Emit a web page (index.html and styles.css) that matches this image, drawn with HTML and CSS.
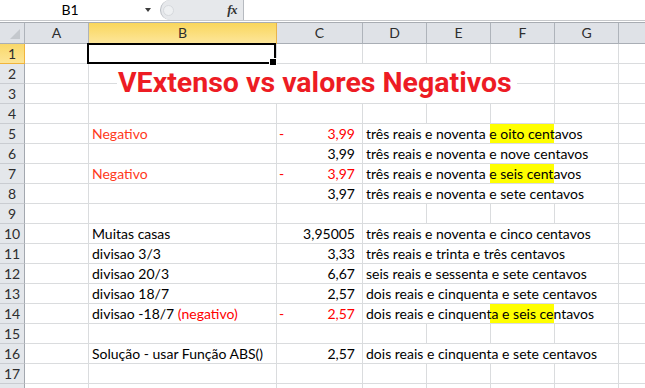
FILE: index.html
```html
<!DOCTYPE html>
<html lang="pt">
<head>
<meta charset="utf-8">
<title>VExtenso vs valores Negativos</title>
<link rel="stylesheet" href="styles.css">
</head>
<body>
<div class="fbar">
  <div class="namebox">B1</div>
  <div class="nbarrow"></div>
  <div class="fxbox"><span class="knob"></span><span class="fx">fx</span></div>
  <div class="finput"></div>
</div>
<div class="sep"></div>
<div class="sheet">
  <!-- header row -->
  <div class="hd corner"></div>
  <div class="hd">A</div>
  <div class="hd sel">B</div>
  <div class="hd">C</div>
  <div class="hd">D</div>
  <div class="hd">E</div>
  <div class="hd">F</div>
  <div class="hd">G</div>
  <div class="hd"></div>

  <!-- row 1 -->
  <div class="rh rsel">1</div>
  <div class="c"></div>
  <div class="c active"></div>
  <div class="c"></div><div class="c"></div><div class="c"></div><div class="c"></div><div class="c"></div><div class="c"></div>

  <!-- row 2-3 -->
  <div class="rh">2</div>
  <div class="c"></div>
  <div class="c title">VExtenso vs valores Negativos</div>
  <div class="c"></div><div class="c"></div>
  <div class="rh">3</div>
  <div class="c"></div>
  <div class="c"></div><div class="c"></div>

  <!-- row 4 -->
  <div class="rh">4</div>
  <div class="c"></div><div class="c"></div><div class="c"></div><div class="c"></div><div class="c"></div><div class="c"></div><div class="c"></div><div class="c"></div>

  <!-- row 5 -->
  <div class="rh">5</div>
  <div class="c"></div>
  <div class="c t neg">Negativo</div>
  <div class="c num red"><span>-</span><span>3,99</span></div>
  <div class="c t span4 yel">três reais e noventa e oito centavos</div>
  <div class="c"></div>

  <!-- row 6 -->
  <div class="rh">6</div>
  <div class="c"></div>
  <div class="c"></div>
  <div class="c num"><span></span><span>3,99</span></div>
  <div class="c t span4">três reais e noventa e nove centavos</div>
  <div class="c"></div>

  <!-- row 7 -->
  <div class="rh">7</div>
  <div class="c"></div>
  <div class="c t neg">Negativo</div>
  <div class="c num red"><span>-</span><span>3,97</span></div>
  <div class="c t span4 yel">três reais e noventa e seis centavos</div>
  <div class="c"></div>

  <!-- row 8 -->
  <div class="rh">8</div>
  <div class="c"></div>
  <div class="c"></div>
  <div class="c num"><span></span><span>3,97</span></div>
  <div class="c t span4">três reais e noventa e sete centavos</div>
  <div class="c"></div>

  <!-- row 9 -->
  <div class="rh">9</div>
  <div class="c"></div><div class="c"></div><div class="c"></div><div class="c"></div><div class="c"></div><div class="c"></div><div class="c"></div><div class="c"></div>

  <!-- row 10 -->
  <div class="rh">10</div>
  <div class="c"></div>
  <div class="c t">Muitas casas</div>
  <div class="c num"><span></span><span>3,95005</span></div>
  <div class="c t span4">três reais e noventa e cinco centavos</div>
  <div class="c"></div>

  <!-- row 11 -->
  <div class="rh">11</div>
  <div class="c"></div>
  <div class="c t">divisao 3/3</div>
  <div class="c num"><span></span><span>3,33</span></div>
  <div class="c t span4">três reais e trinta e três centavos</div>
  <div class="c"></div>

  <!-- row 12 -->
  <div class="rh">12</div>
  <div class="c"></div>
  <div class="c t">divisao 20/3</div>
  <div class="c num"><span></span><span>6,67</span></div>
  <div class="c t span4">seis reais e sessenta e sete centavos</div>
  <div class="c"></div>

  <!-- row 13 -->
  <div class="rh">13</div>
  <div class="c"></div>
  <div class="c t">divisao 18/7</div>
  <div class="c num"><span></span><span>2,57</span></div>
  <div class="c t span4">dois reais e cinquenta e sete centavos</div>
  <div class="c"></div>

  <!-- row 14 -->
  <div class="rh">14</div>
  <div class="c"></div>
  <div class="c t">divisao -18/7 <span class="red">(negativo)</span></div>
  <div class="c num red"><span>-</span><span>2,57</span></div>
  <div class="c t span4 yel">dois reais e cinquenta e seis centavos</div>
  <div class="c"></div>

  <!-- row 15 -->
  <div class="rh">15</div>
  <div class="c"></div><div class="c"></div><div class="c"></div><div class="c"></div><div class="c"></div><div class="c"></div><div class="c"></div><div class="c"></div>

  <!-- row 16 -->
  <div class="rh">16</div>
  <div class="c"></div>
  <div class="c t">Solução - usar Função ABS()</div>
  <div class="c num"><span></span><span>2,57</span></div>
  <div class="c t span4">dois reais e cinquenta e sete centavos</div>
  <div class="c"></div>

  <!-- row 17 -->
  <div class="rh">17</div>
  <div class="c"></div><div class="c"></div><div class="c"></div><div class="c"></div><div class="c"></div><div class="c"></div><div class="c"></div><div class="c"></div>

  <!-- row 18 (partly visible) -->
  <div class="rh"></div>
  <div class="c"></div><div class="c"></div><div class="c"></div><div class="c"></div><div class="c"></div><div class="c"></div><div class="c"></div><div class="c"></div>
</div>
</body>
</html>
```
FILE: styles.css
```css
* { box-sizing: border-box; }
html, body { margin: 0; padding: 0; }
body {
  width: 645px;
  height: 388px;
  overflow: hidden;
  background: #fff;
  font-family: Lato, "Liberation Sans", sans-serif;
  font-size: 14px;
  color: #000;
}

/* formula bar */
.fbar {
  display: flex;
  height: 21px;
  border-bottom: 1px solid #c6c8cb;
  background: #fff;
}
.namebox {
  width: 140px;
  text-align: center;
  font-size: 14px;
  line-height: 20px;
  color: #000;
}
.nbarrow {
  width: 20px;
  display: flex;
  align-items: center;
  padding-left: 5px;
}
.nbarrow::before {
  content: "";
  border-left: 3.5px solid transparent;
  border-right: 3.5px solid transparent;
  border-top: 4px solid #3d3d3d;
}
.fxbox {
  width: 84px;
  height: 20px;
  background: #e6e8eb;
  border-radius: 10px 0 0 10px;
  border-left: 1px solid #b8bcc2;
  border-right: 1px solid #b6bac0;
  display: flex;
  align-items: center;
  padding-left: 2px;
}
.knob {
  width: 11px;
  height: 11px;
  border-radius: 50%;
  background: #eef0f2;
  border: 1px solid #d6d9dd;
}
.fx {
  margin-left: auto;
  margin-right: 6px;
  font-family: "Liberation Serif", serif;
  font-style: italic;
  font-weight: bold;
  font-size: 13px;
  color: #333;
  letter-spacing: -0.5px;
}
.finput { flex: 1; }
.sep {
  height: 2px;
  border-bottom: 1px solid #a8acb2;
  background: #fff;
}

/* sheet grid */
.sheet {
  display: grid;
  grid-template-columns: 25px 64px 188px 86px 64px 64px 64px 64px 27px;
  grid-template-rows: 21px;
  grid-auto-rows: 20px;
  width: 645px;
}
.hd {
  background: #dfe2e7;
  border-right: 1px solid #aeb3ba;
  border-bottom: 1px solid #a9aeb5;
  text-align: center;
  line-height: 20px;
  font-size: 14px;
  color: #2e2e2e;
}
.hd.sel {
  background: linear-gradient(#f9d65c, #fde69a);
  border-bottom-color: #f0b43c;
  border-right-color: #e8b44c;
}
.corner {
  position: relative;
}
.corner::after {
  content: "";
  position: absolute;
  right: 4px;
  bottom: 4px;
  width: 0;
  height: 0;
  border-left: 10px solid transparent;
  border-bottom: 10px solid #c4c8cd;
}
.rh {
  background: #e4e7eb;
  border-right: 1px solid #a3a8af;
  border-bottom: 1px solid #c9ccd1;
  text-align: center;
  line-height: 19px;
  font-size: 14px;
  color: #2e2e2e;
}
.rh.rsel {
  background: linear-gradient(#f9d86a, #fde597);
  border-bottom-color: #f0b43c;
  border-right-color: #f0b43c;
}
.c {
  border-right: 1px solid #dadcde;
  border-bottom: 1px solid #dadcde;
  line-height: 19px;
  white-space: nowrap;
}
.t { padding-left: 3px; }
.span4 { grid-column: span 4; }
.yel {
  background: linear-gradient(#ffff00, #ffff00) no-repeat 127px 0 / 64px 100%;
}
.neg { color: #ff3a1c; }
.red { color: #ff0000; }
.num {
  display: flex;
  justify-content: space-between;
  padding-left: 2px;
  padding-right: 7px;
}
.active {
  position: relative;
  z-index: 2;
}
.active::before {
  content: "";
  position: absolute;
  left: -2px;
  top: -1px;
  right: 0;
  bottom: -1px;
  border: 2px solid #000;
}
.active::after {
  content: "";
  position: absolute;
  right: -1px;
  bottom: -3px;
  width: 6px;
  height: 6px;
  background: #000;
  border: 1px solid #fff;
}
.title {
  grid-column: span 5;
  grid-row: span 2;
  padding-left: 29px;
  font-family: Roboto, "Liberation Sans", sans-serif;
  font-weight: bold;
  font-size: 28.5px;
  line-height: 38px;
  color: #ed1c24;
  background:
    linear-gradient(#dadcde, #dadcde) no-repeat 0 19px / 28px 1px,
    linear-gradient(#dadcde, #dadcde) no-repeat right 0 top 19px / 37px 1px;
}
```
